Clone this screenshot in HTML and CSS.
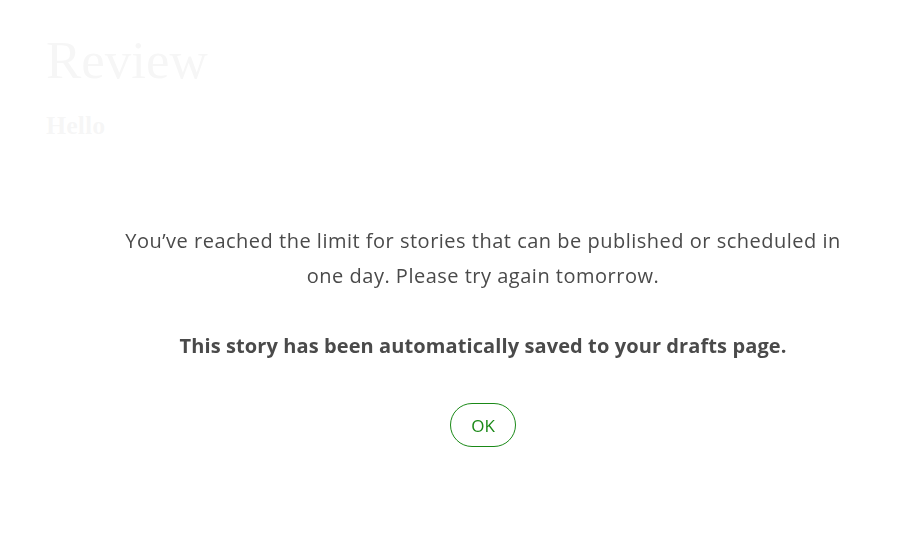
FILE: index.html
```html
<!DOCTYPE html>
<html lang="en">
<head>
<meta charset="utf-8">
<title>Review</title>
<link rel="stylesheet" href="styles.css">
</head>
<body>
<main class="page">
  <h1 class="page-title">Review</h1>
  <h2 class="page-subtitle">Hello</h2>
</main>
<div class="overlay">
  <div class="dialog">
    <p class="dialog-message">You’ve reached the limit for stories that can be published or scheduled in one day. Please try again tomorrow.</p>
    <p class="dialog-note">This story has been automatically saved to your drafts page.</p>
    <button class="dialog-button" type="button">OK</button>
  </div>
</div>
</body>
</html>
```

FILE: styles.css
```css
html, body {
  margin: 0;
  padding: 0;
  background: #ffffff;
}

.page {
  padding: 28px 46px 0;
  font-family: "Liberation Serif", "Times New Roman", serif;
  color: #1a1a1a;
}

.page-title {
  margin: 0;
  font-size: 53px;
  font-weight: 400;
  line-height: 64px;
}

.page-subtitle {
  margin: 18px 0 0;
  font-size: 26px;
  font-weight: 700;
  line-height: 32px;
}

.overlay {
  position: fixed;
  inset: 0;
  background: rgba(255, 255, 255, 0.96);
  display: flex;
  align-items: flex-start;
  justify-content: center;
  padding-left: 58px;
  padding-top: 223px;
}

.dialog {
  width: 740px;
  display: flex;
  flex-direction: column;
  align-items: center;
  text-align: center;
  font-family: "Open Sans", Lato, sans-serif;
  color: #4a4a4a;
}

.dialog-message {
  margin: 0;
  font-size: 20px;
  line-height: 35px;
  letter-spacing: 0.5px;
}

.dialog-note {
  margin: 35px 0 0;
  font-size: 20px;
  line-height: 35px;
  font-weight: 700;
  letter-spacing: 0.1px;
}

.dialog-button {
  margin-top: 40px;
  width: 66px;
  height: 44px;
  border: 1px solid #1a8917;
  border-radius: 22px;
  background: #ffffff;
  color: #1a8917;
  font-family: "Open Sans", Lato, sans-serif;
  font-size: 17px;
  padding: 0;
  cursor: pointer;
}
```
